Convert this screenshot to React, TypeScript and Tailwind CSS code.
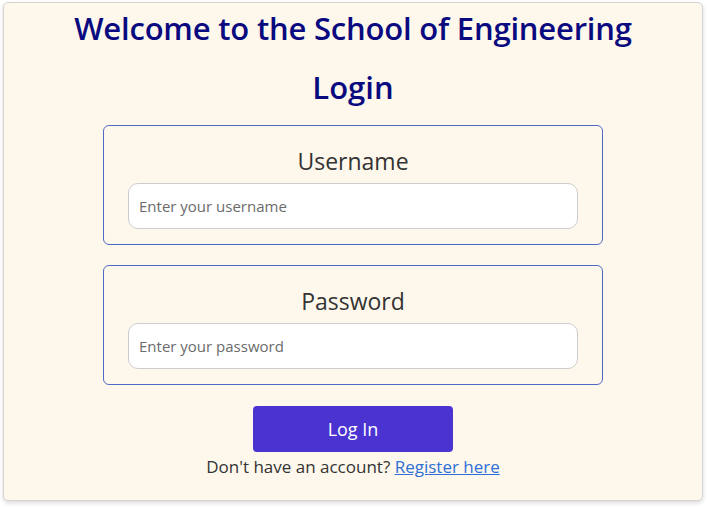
import React from 'react';

const Field: React.FC<{ label: string; type: string; placeholder: string }> = ({ label, type, placeholder }) => (
  <div className="w-[500px] h-[120px] border border-[#4d6bc2] rounded-md flex flex-col items-center pt-[20px]">
    <label className="text-[23px] leading-[30px] text-[#333]">{label}</label>
    <input
      type={type}
      placeholder={placeholder}
      className="mt-[7px] w-[450px] h-[46px] bg-white border border-[#ccc] rounded-[10px] px-[10px] text-[15px] placeholder:text-[#6b6b6b] outline-none"
    />
  </div>
);

const App: React.FC = () => {
  return (
    <div className="min-h-[508px] bg-white pt-[2px] pl-[3px] font-['Open_Sans',sans-serif]">
      <div className="w-[700px] h-[499px] bg-[#fef8ec] border border-[#d4d4d4] rounded-[5px] shadow-[0_2px_4px_rgba(0,0,0,0.15)] flex flex-col items-center">
        <h1 className="mt-[5px] text-[31px] leading-[40px] font-semibold text-[#0a0a80] tracking-[-0.2px]">
          Welcome to the School of Engineering
        </h1>
        <h2 className="mt-[19px] text-[31px] leading-[40px] font-semibold text-[#0a0a80]">Login</h2>
        <div className="mt-[18px] flex flex-col gap-[20px]">
          <Field label="Username" type="text" placeholder="Enter your username" />
          <Field label="Password" type="password" placeholder="Enter your password" />
        </div>
        <button className="mt-[21px] w-[200px] h-[46px] bg-[#4a33d1] text-white text-[18px] rounded-[4px]">
          Log In
        </button>
        <p className="mt-[2px] text-[17px] leading-[26px] text-[#333]">
          Don't have an account?{' '}
          <a href="#" className="text-[#2f6fd8] underline">Register here</a>
        </p>
      </div>
    </div>
  );
};

export default App;
